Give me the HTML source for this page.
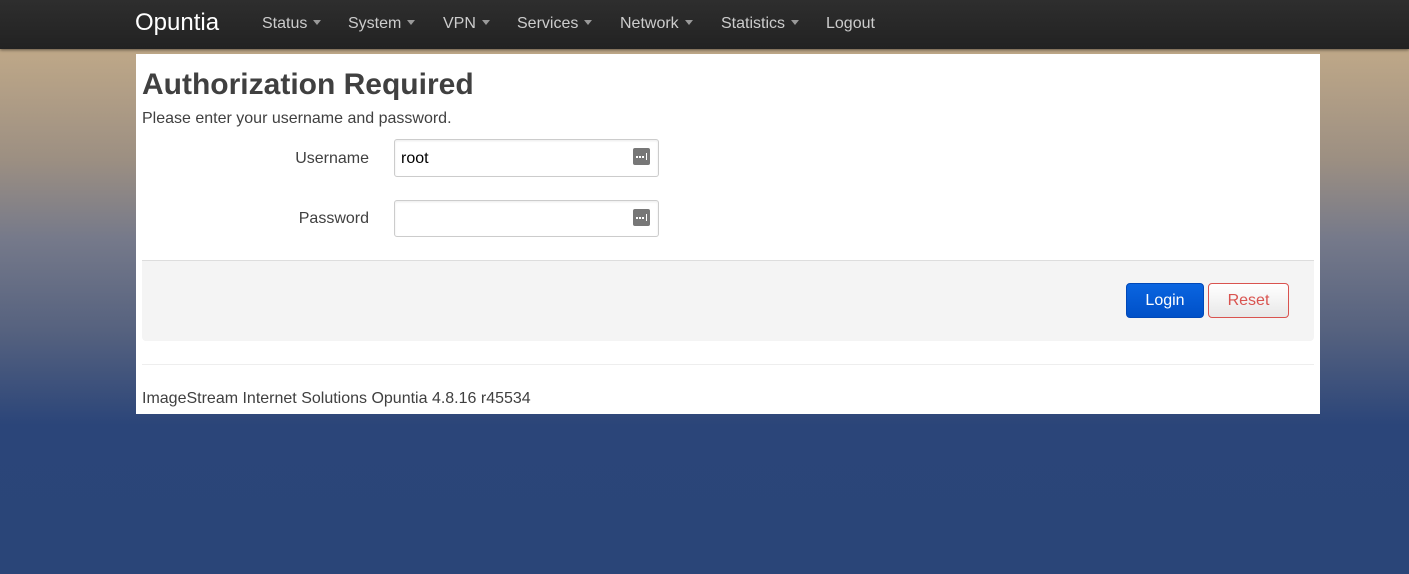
<!DOCTYPE html>
<html><head><meta charset="utf-8"><style>
*{box-sizing:border-box}
html,body{margin:0;padding:0}
body{width:1409px;height:574px;overflow:hidden;font-family:"Liberation Sans",Arial,sans-serif;color:#404040;
background:linear-gradient(to bottom,#bfa888 49px,#9c8f82 160px,#75798a 240px,#56627f 330px,#2b4579 425px,#2a4578 574px);}
.nav{position:absolute;left:0;top:0;width:1409px;height:49px;background:linear-gradient(#2e2e2e,#222);box-shadow:0 1px 3px rgba(0,0,0,.5)}
.brand{position:absolute;left:135px;top:9px;font-size:24px;color:#fff}
.menu{position:absolute;top:15px;font-size:16px;color:#ccc;white-space:nowrap}
.caret{display:inline-block;width:0;height:0;border-left:4.5px solid transparent;border-right:4.5px solid transparent;border-top:5px solid #999;vertical-align:middle;margin-left:6px;margin-top:-2px}
.main{position:absolute;left:136px;top:54px;width:1184px;height:360px;background:#fff}
h1{position:absolute;left:6px;top:14px;margin:0;font-size:30px;font-weight:bold;color:#404040}
.sub{position:absolute;left:6px;top:56px;font-size:16px}
.lbl{position:absolute;font-size:16px;text-align:right;width:233px;left:0}
.inp{position:absolute;left:258px;width:265px;height:38px;border:1px solid #ccc;border-radius:3px;box-shadow:inset 0 1px 2px rgba(0,0,0,.08);font-size:16px;color:#000;padding:10px 6px}
.key{position:absolute;right:8px;top:8px;width:17px;height:17px;background:#777;border-radius:2px}
.key:after{content:"";position:absolute;left:3px;top:8px;width:8px;height:2px;background:repeating-linear-gradient(to right,#fff 0 2px,transparent 2px 3px)}
.key:before{content:"";position:absolute;left:13px;top:5px;width:1px;height:7px;background:#fff}
.bar{position:absolute;left:6px;top:206px;width:1172px;height:81px;background:#f4f4f4;border-top:1px solid #ddd;border-radius:0 0 4px 4px}
.btn{position:absolute;top:22px;height:35px;border-radius:4px;font-size:16px;text-align:center;line-height:34px}
.login{left:984px;width:78px;background:linear-gradient(#0a65e0,#0050c8);border:1px solid #0048b8;color:#fff}
.reset{left:1066px;width:81px;background:linear-gradient(#fff,#e8e8e8);border:1px solid #d9534f;color:#d9534f}
.hr{position:absolute;left:6px;top:310px;width:1172px;border-top:1px solid #eee}
.foot{position:absolute;left:6px;top:336px;font-size:16px}
</style></head><body>
<div class="nav">
<div class="brand">Opuntia</div>
<div class="menu" style="left:262px">Status<span class="caret"></span></div>
<div class="menu" style="left:348px">System<span class="caret"></span></div>
<div class="menu" style="left:443px">VPN<span class="caret"></span></div>
<div class="menu" style="left:517px">Services<span class="caret"></span></div>
<div class="menu" style="left:620px">Network<span class="caret"></span></div>
<div class="menu" style="left:721px">Statistics<span class="caret"></span></div>
<div class="menu" style="left:826px">Logout</div>
</div>
<div class="main">
<h1>Authorization Required</h1>
<div class="sub">Please enter your username and password.</div>
<div class="lbl" style="top:96px">Username</div>
<div class="inp" style="top:85px">root<span class="key"></span></div>
<div class="lbl" style="top:156px">Password</div>
<div class="inp" style="top:146px;height:37px"><span class="key"></span></div>
<div class="bar">
<div class="btn login">Login</div>
<div class="btn reset">Reset</div>
</div>
<div class="hr"></div>
<div class="foot">ImageStream Internet Solutions Opuntia 4.8.16 r45534</div>
</div>
</body></html>
